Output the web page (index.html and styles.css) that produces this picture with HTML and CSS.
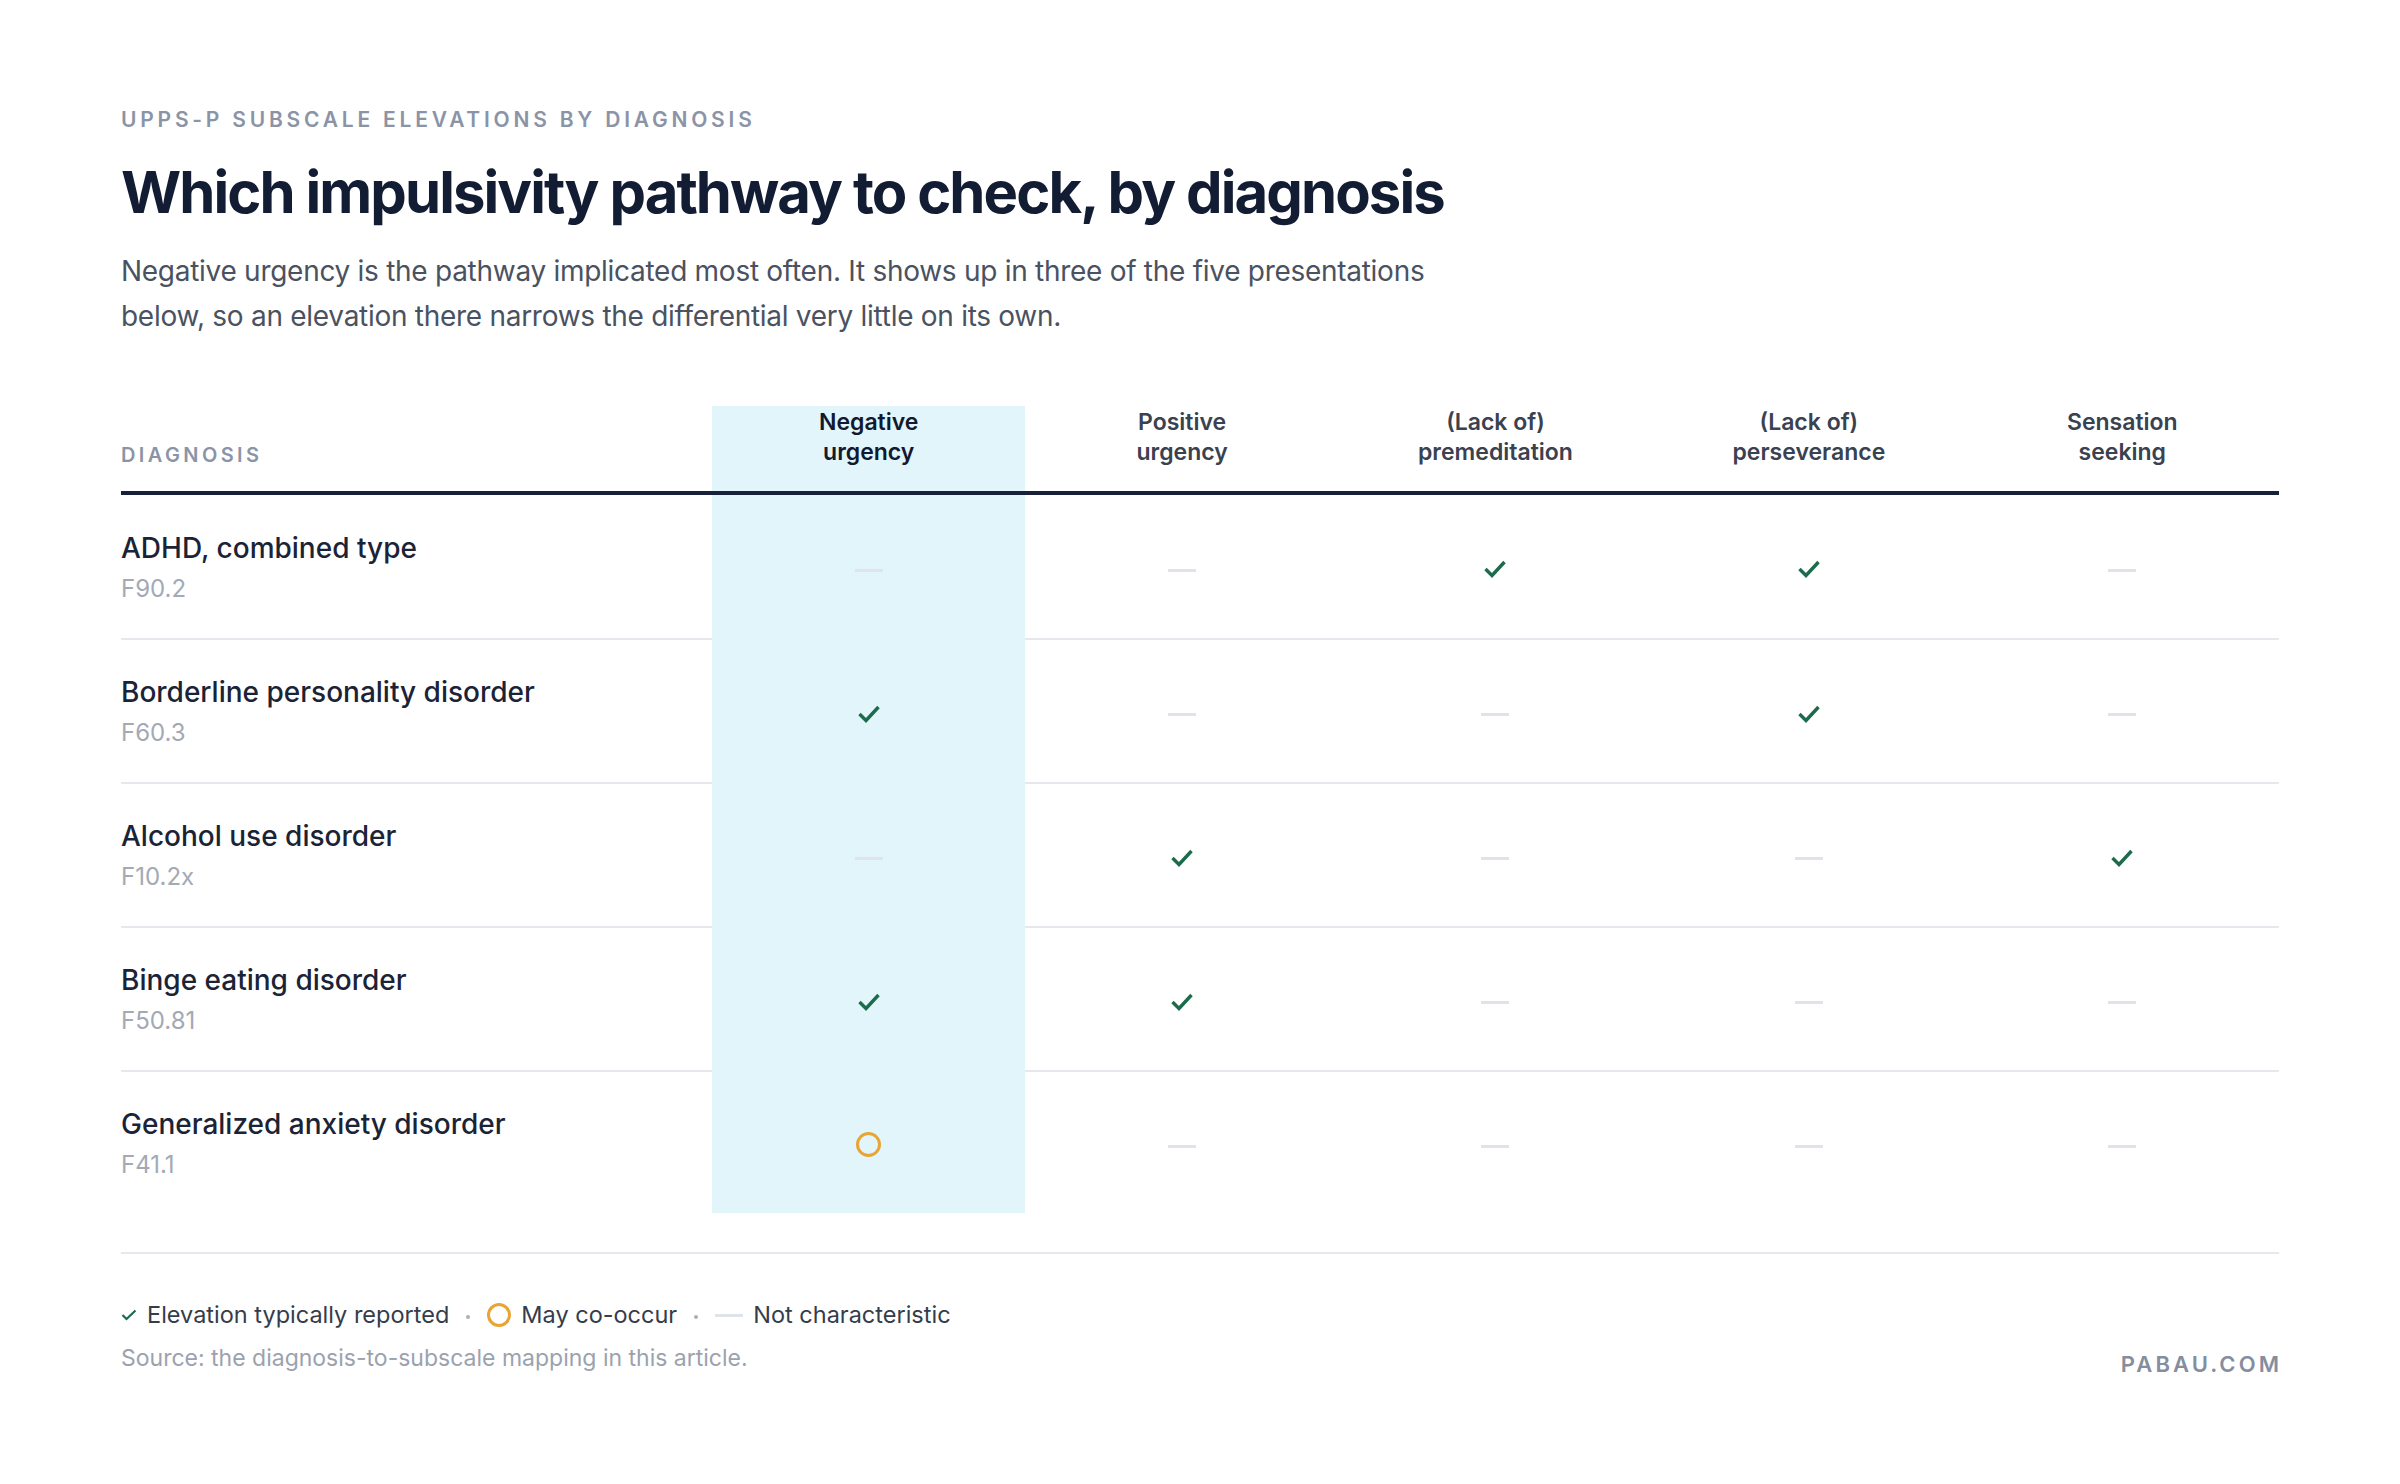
FILE: index.html
```html
<!DOCTYPE html>
<html lang="en">
<head>
<meta charset="utf-8">
<title>UPPS-P subscale elevations by diagnosis</title>
<link rel="stylesheet" href="styles.css">
</head>
<body>
<main class="page">
  <p class="eyebrow">UPPS-P subscale elevations by diagnosis</p>
  <h1 class="title">Which impulsivity pathway to check, by diagnosis</h1>
  <p class="lede">Negative urgency is the pathway implicated most often. It shows up in three of the five presentations below, so an elevation there narrows the differential very little on its own.</p>

  <table class="grid">
    <colgroup>
      <col class="col-dx">
      <col><col><col><col><col>
    </colgroup>
    <thead>
      <tr>
        <th class="th-dx">Diagnosis</th>
        <th class="hl th-hl">Negative<br>urgency</th>
        <th>Positive<br>urgency</th>
        <th>(Lack of)<br>premeditation</th>
        <th>(Lack of)<br>perseverance</th>
        <th>Sensation<br>seeking</th>
      </tr>
    </thead>
    <tbody>
      <tr>
        <td class="dx"><div class="dx-name">ADHD, combined type</div><div class="dx-code">F90.2</div></td>
        <td class="hl"><span class="dash"></span></td>
        <td><span class="dash"></span></td>
        <td><svg class="check" viewBox="0 0 24 20" width="24" height="20"><polyline points="2.5,10 9,16.5 21.5,3"/></svg></td>
        <td><svg class="check" viewBox="0 0 24 20" width="24" height="20"><polyline points="2.5,10 9,16.5 21.5,3"/></svg></td>
        <td><span class="dash"></span></td>
      </tr>
      <tr>
        <td class="dx"><div class="dx-name">Borderline personality disorder</div><div class="dx-code">F60.3</div></td>
        <td class="hl"><svg class="check" viewBox="0 0 24 20" width="24" height="20"><polyline points="2.5,10 9,16.5 21.5,3"/></svg></td>
        <td><span class="dash"></span></td>
        <td><span class="dash"></span></td>
        <td><svg class="check" viewBox="0 0 24 20" width="24" height="20"><polyline points="2.5,10 9,16.5 21.5,3"/></svg></td>
        <td><span class="dash"></span></td>
      </tr>
      <tr>
        <td class="dx"><div class="dx-name">Alcohol use disorder</div><div class="dx-code">F10.2x</div></td>
        <td class="hl"><span class="dash"></span></td>
        <td><svg class="check" viewBox="0 0 24 20" width="24" height="20"><polyline points="2.5,10 9,16.5 21.5,3"/></svg></td>
        <td><span class="dash"></span></td>
        <td><span class="dash"></span></td>
        <td><svg class="check" viewBox="0 0 24 20" width="24" height="20"><polyline points="2.5,10 9,16.5 21.5,3"/></svg></td>
      </tr>
      <tr>
        <td class="dx"><div class="dx-name">Binge eating disorder</div><div class="dx-code">F50.81</div></td>
        <td class="hl"><svg class="check" viewBox="0 0 24 20" width="24" height="20"><polyline points="2.5,10 9,16.5 21.5,3"/></svg></td>
        <td><svg class="check" viewBox="0 0 24 20" width="24" height="20"><polyline points="2.5,10 9,16.5 21.5,3"/></svg></td>
        <td><span class="dash"></span></td>
        <td><span class="dash"></span></td>
        <td><span class="dash"></span></td>
      </tr>
      <tr>
        <td class="dx"><div class="dx-name">Generalized anxiety disorder</div><div class="dx-code">F41.1</div></td>
        <td class="hl"><span class="ring"></span></td>
        <td><span class="dash"></span></td>
        <td><span class="dash"></span></td>
        <td><span class="dash"></span></td>
        <td><span class="dash"></span></td>
      </tr>
    </tbody>
  </table>

  <footer class="foot">
    <div class="foot-left">
      <div class="legend">
        <span class="lg-item"><svg class="lg-check" viewBox="0 0 16 12" width="16" height="12"><polyline points="1.5,6 5.5,10 14.5,1.5"/></svg>Elevation typically reported</span>
        <span class="sep"></span>
        <span class="lg-item"><span class="lg-ring"></span>May co-occur</span>
        <span class="sep"></span>
        <span class="lg-item"><span class="lg-dash"></span>Not characteristic</span>
      </div>
      <p class="source">Source: the diagnosis-to-subscale mapping in this article.</p>
    </div>
    <div class="brand">PABAU.COM</div>
  </footer>
</main>
</body>
</html>
```

FILE: styles.css
```css
* { box-sizing: border-box; }

html, body {
  margin: 0;
  background: #ffffff;
}

body {
  font-family: "Inter", "Liberation Sans", sans-serif;
  color: #1b2336;
}

.page {
  padding: 108px 121px 0 121px;
}

.eyebrow {
  margin: 0;
  font-size: 21px;
  line-height: 24px;
  font-weight: 600;
  letter-spacing: 0.18em;
  text-transform: uppercase;
  color: #8b94a6;
}

.title {
  margin: 24px 0 0;
  font-size: 58px;
  line-height: 72px;
  font-weight: 700;
  letter-spacing: -0.033em;
  color: #121c33;
}

.lede {
  margin: 21px 0 0;
  max-width: 1330px;
  font-size: 28px;
  line-height: 45px;
  font-weight: 400;
  letter-spacing: -0.01em;
  color: #4a5261;
}

.grid {
  margin-top: 67px;
  width: 100%;
  table-layout: fixed;
  border-collapse: collapse;
  border-spacing: 0;
}

.col-dx { width: 591px; }

.grid th {
  padding: 1px 0 24px;
  font-size: 23px;
  line-height: 30px;
  font-weight: 600;
  color: #3a414f;
  text-align: center;
  vertical-align: bottom;
  border-bottom: 4px solid #17223a;
}

.grid th.th-dx {
  padding-bottom: 21px;
  text-align: left;
  font-size: 20px;
  font-weight: 600;
  letter-spacing: 0.17em;
  text-transform: uppercase;
  color: #8b94a6;
}

.grid th.th-hl {
  color: #111a2e;
}

.grid td {
  height: 144px;
  padding: 4px 0 0;
  text-align: center;
  vertical-align: middle;
  border-bottom: 2px solid #e6e8ed;
}

.grid tbody tr:first-child td {
  height: 146px;
}

.grid tbody tr:last-child td {
  border-bottom: 0;
  height: 142px;
}

.grid .hl {
  background: #e2f5fa;
}

.grid td.hl {
  border-bottom-color: #e2f5fa;
}

.grid td.dx {
  text-align: left;
  padding: 0;
}

.dx-name {
  font-size: 28px;
  line-height: 38px;
  font-weight: 500;
  color: #1b2336;
}

.dx-code {
  margin-top: 6px;
  font-size: 24px;
  line-height: 32px;
  font-weight: 400;
  color: #a3a9b5;
}

.dash {
  display: inline-block;
  width: 28px;
  height: 3px;
  background: #e0e4ea;
  vertical-align: middle;
}

.check {
  display: inline-block;
  vertical-align: middle;
  fill: none;
  stroke: #1c6b4c;
  stroke-width: 3.4;
  stroke-linejoin: miter;
}

.ring {
  display: inline-block;
  width: 25px;
  height: 25px;
  border: 3px solid #e8a534;
  border-radius: 50%;
  vertical-align: middle;
}

.foot {
  margin-top: 39px;
  border-top: 2px solid #e6e8ed;
  padding-top: 45px;
  display: flex;
  justify-content: space-between;
  align-items: flex-end;
}

.legend {
  display: flex;
  align-items: center;
  font-size: 23.5px;
  line-height: 32px;
  color: #353c4a;
}

.lg-item {
  display: inline-flex;
  align-items: center;
  gap: 10px;
}

.lg-check {
  fill: none;
  stroke: #1c6b4c;
  stroke-width: 2.2;
}

.lg-ring {
  display: inline-block;
  width: 24px;
  height: 24px;
  border: 3px solid #e8a534;
  border-radius: 50%;
}

.lg-dash {
  display: inline-block;
  width: 28px;
  height: 3px;
  background: #dfe3ea;
}

.sep {
  display: inline-block;
  width: 4px;
  height: 4px;
  margin: 4px 17px 0;
  border-radius: 50%;
  background: #aab0ba;
}

.source {
  margin: 12px 0 0;
  font-size: 23px;
  line-height: 30px;
  color: #9ba2ae;
}

.brand {
  margin-bottom: -5px;
  margin-right: -3px;
  font-size: 22px;
  line-height: 28px;
  font-weight: 600;
  letter-spacing: 0.14em;
  color: #858d9e;
}
```
